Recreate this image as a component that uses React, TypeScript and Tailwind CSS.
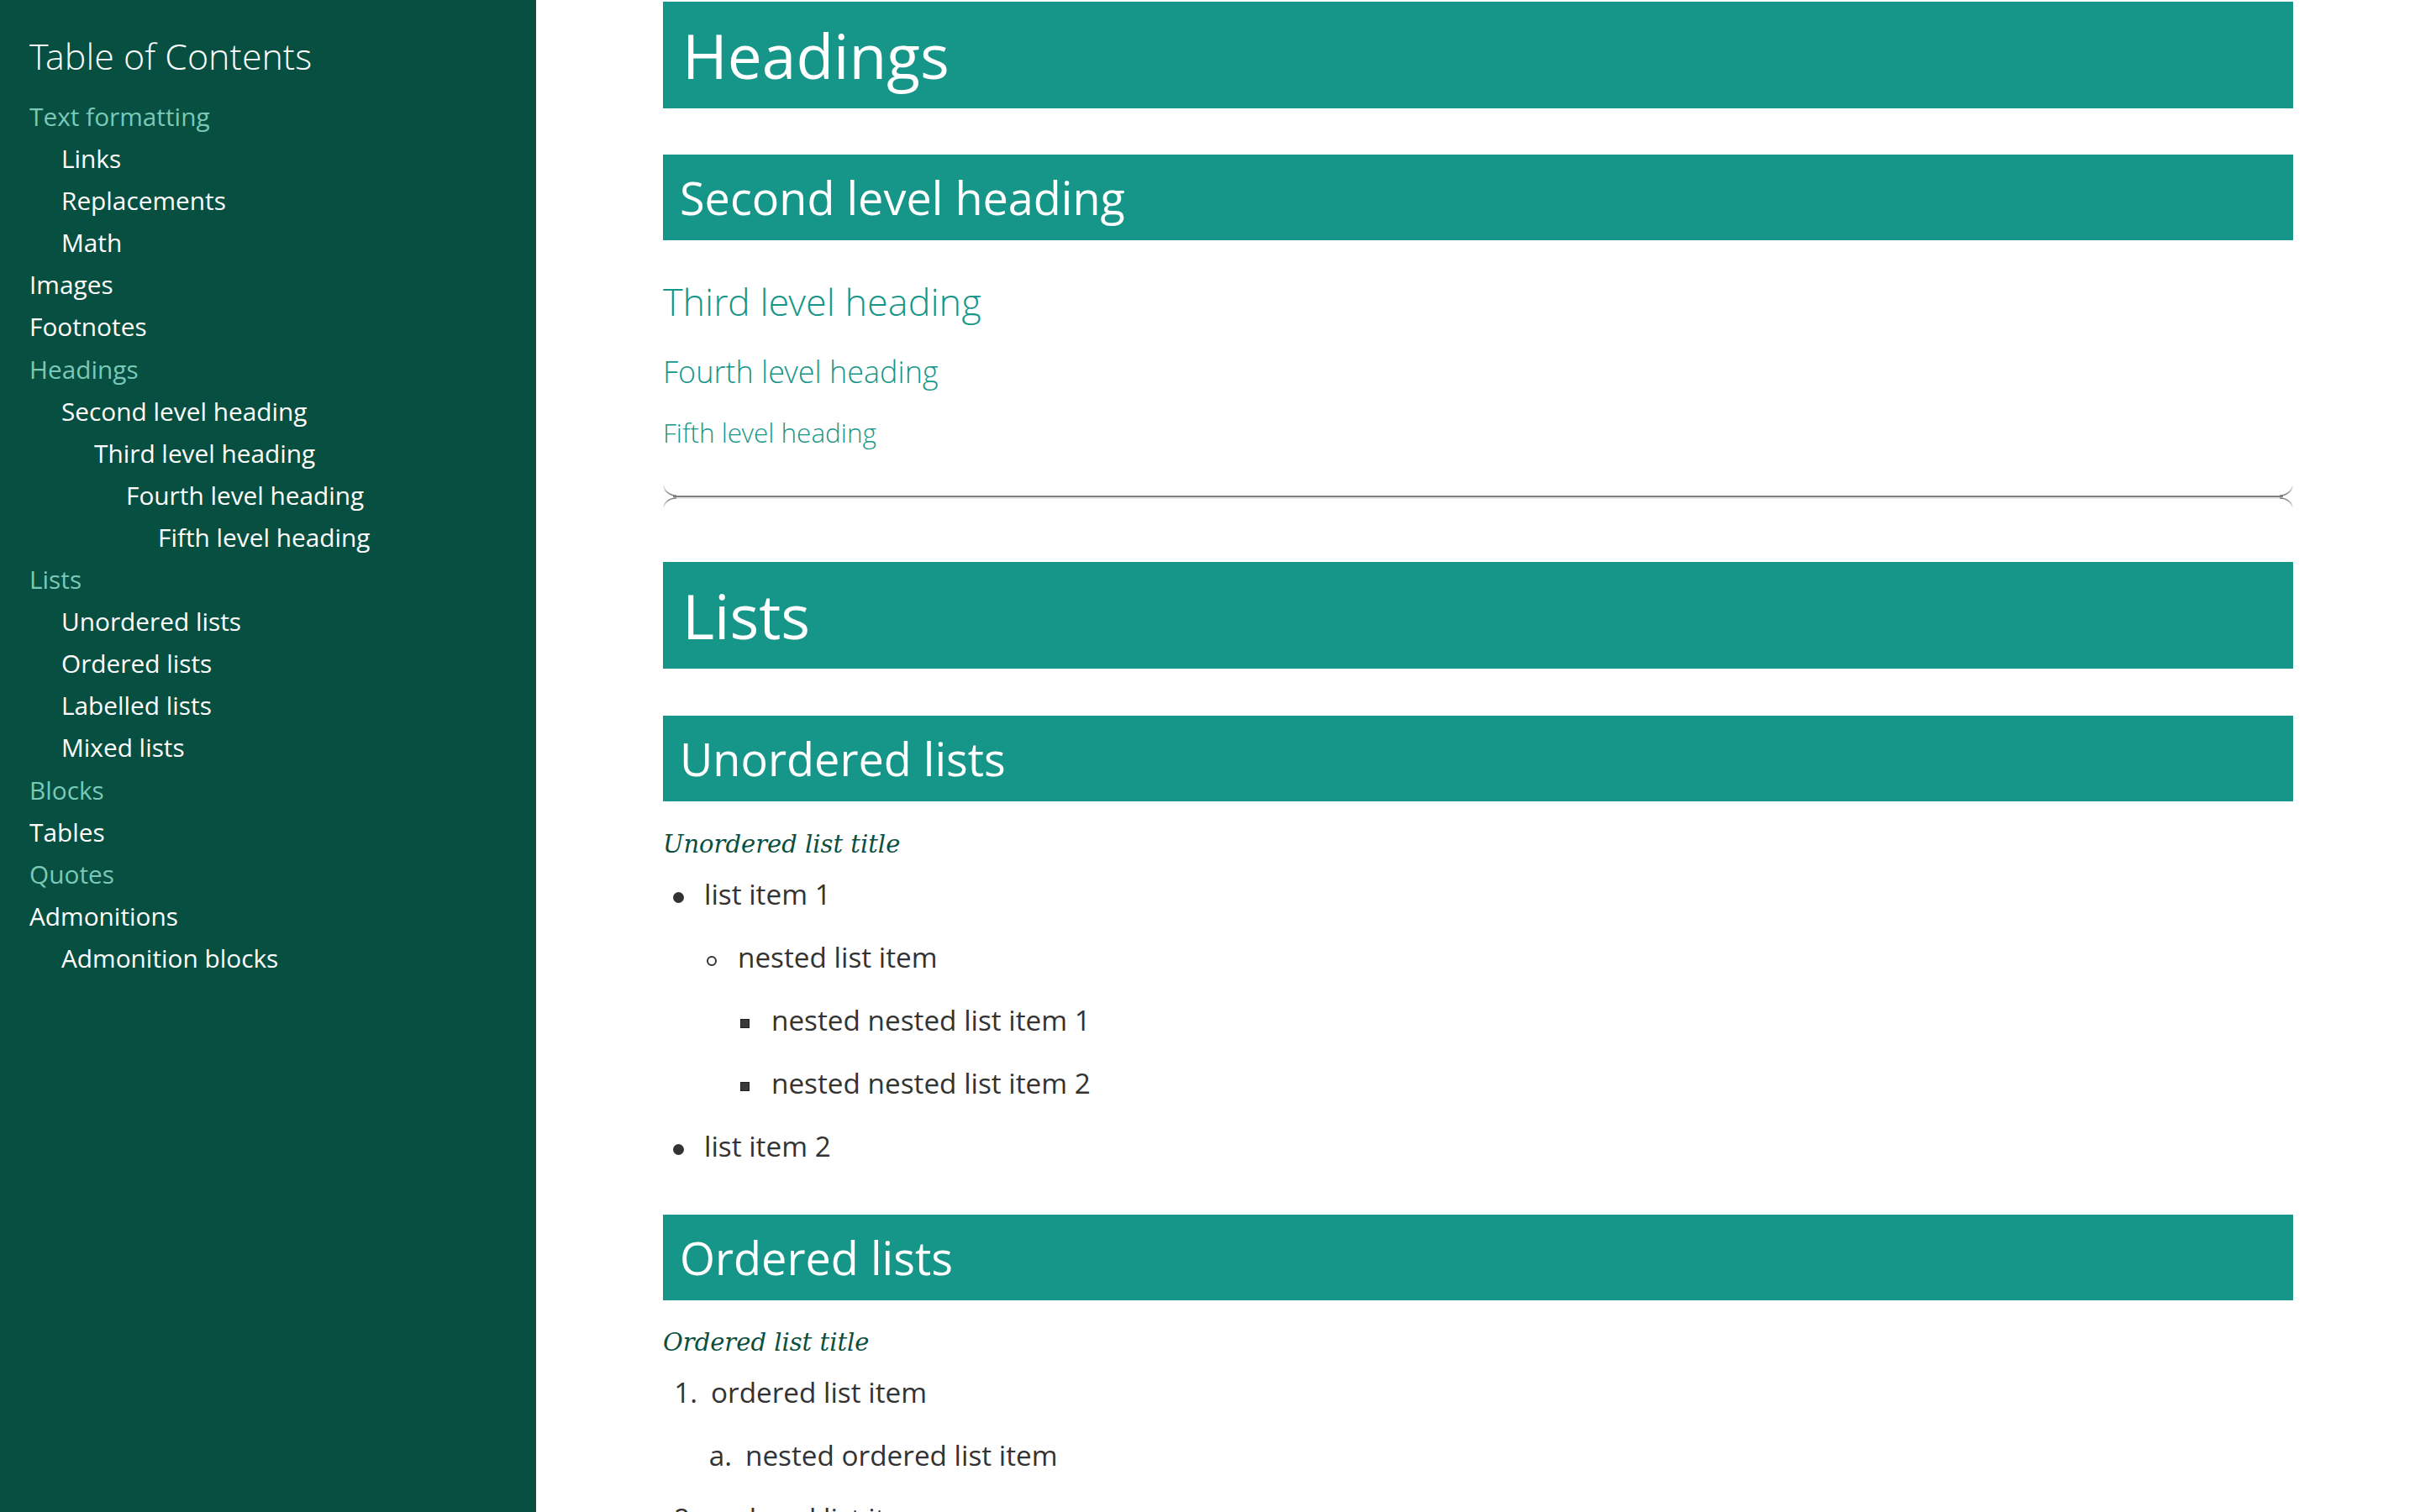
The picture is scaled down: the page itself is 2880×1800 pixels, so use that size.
import React from "react";

type TocItem = { label: string; level: 0 | 1 | 2 | 3 | 4; accent?: boolean };

const toc: TocItem[] = [
  { label: "Text formatting", level: 0, accent: true },
  { label: "Links", level: 1 },
  { label: "Replacements", level: 1 },
  { label: "Math", level: 1 },
  { label: "Images", level: 0 },
  { label: "Footnotes", level: 0 },
  { label: "Headings", level: 0, accent: true },
  { label: "Second level heading", level: 1 },
  { label: "Third level heading", level: 2 },
  { label: "Fourth level heading", level: 3 },
  { label: "Fifth level heading", level: 4 },
  { label: "Lists", level: 0, accent: true },
  { label: "Unordered lists", level: 1 },
  { label: "Ordered lists", level: 1 },
  { label: "Labelled lists", level: 1 },
  { label: "Mixed lists", level: 1 },
  { label: "Blocks", level: 0, accent: true },
  { label: "Tables", level: 0 },
  { label: "Quotes", level: 0, accent: true },
  { label: "Admonitions", level: 0 },
  { label: "Admonition blocks", level: 1 },
];

const indent: Record<number, string> = {
  0: "pl-0",
  1: "pl-[38px]",
  2: "pl-[77px]",
  3: "pl-[115px]",
  4: "pl-[153px]",
};

function BoxH1({ children, className = "" }: { children: React.ReactNode; className?: string }) {
  return (
    <h1 className={`h-[127px] bg-[#169689] pl-[23px] text-[73px] leading-[127px] font-normal text-white ${className}`}>
      {children}
    </h1>
  );
}

function BoxH2({ children, className = "" }: { children: React.ReactNode; className?: string }) {
  return (
    <h2 className={`h-[102px] bg-[#169689] pl-[20px] text-[54px] leading-[102px] font-normal text-white ${className}`}>
      {children}
    </h2>
  );
}

function Cap({ flip = false }: { flip?: boolean }) {
  const top = flip ? "capTopR" : "capTopL";
  const bot = flip ? "capBotR" : "capBotL";
  return (
    <svg width="16" height="28" viewBox="0 0 16 28" className={`shrink-0 ${flip ? "-scale-x-100" : ""}`}>
      <defs>
        <linearGradient id={top} x1="0" y1="0" x2="0" y2="1">
          <stop offset="0" stopColor="#ffffff" />
          <stop offset="1" stopColor="#7a7a7a" />
        </linearGradient>
        <linearGradient id={bot} x1="0" y1="0" x2="0" y2="1">
          <stop offset="0" stopColor="#7a7a7a" />
          <stop offset="1" stopColor="#ffffff" />
        </linearGradient>
      </defs>
      <path d="M0.8 0 A15.2 13 0 0 0 16 13" fill="none" stroke={`url(#${top})`} strokeWidth="1.6" />
      <rect x="12" y="13" width="4" height="2" fill="#7f7f7f" />
      <path d="M16 16 A15.2 12 0 0 0 0.8 28" fill="none" stroke={`url(#${bot})`} strokeWidth="1.6" />
    </svg>
  );
}

function Rule() {
  return (
    <div className="mt-[40px] flex h-[28px]">
      <Cap />
      <div className="flex-1 pt-[13px]">
        <div className="h-[2px] bg-[#7f7f7f]" />
        <div className="h-[2px] bg-[#e8e8e8]" />
      </div>
      <Cap flip />
    </div>
  );
}

function Disc() {
  return <span className="block h-[13px] w-[13px] rounded-full bg-[#333333]" />;
}
function Circle() {
  return <span className="block h-[12px] w-[12px] rounded-full border-2 border-[#333333]" />;
}
function Square() {
  return <span className="block h-[11px] w-[11px] border border-[#222222] bg-[#3a3a3a]" />;
}

const ulIndent: Record<number, string> = {
  0: "pl-0",
  1: "pl-[40px]",
  2: "pl-[80px]",
};

function UlItem({ level, children }: { level: 0 | 1 | 2; children: React.ReactNode }) {
  const marker = level === 0 ? <Disc /> : level === 1 ? <Circle /> : <Square />;
  return (
    <li className={`flex h-[75px] leading-[75px] ${ulIndent[level]}`}>
      <span className="flex w-[49px] shrink-0 items-center pl-[12px] pt-[8px]">{marker}</span>
      <span>{children}</span>
    </li>
  );
}

const olIndent: Record<number, string> = {
  0: "pl-0",
  1: "pl-[41px]",
};

function OlItem({ level, marker, children }: { level: 0 | 1; marker: string; children: React.ReactNode }) {
  return (
    <li className={`flex h-[75px] leading-[75px] ${olIndent[level]}`}>
      <span className="w-[57px] shrink-0 pr-[16px] text-right">{marker}</span>
      <span>{children}</span>
    </li>
  );
}

const light = "font-['Open_Sans_Light','Open_Sans',sans-serif] font-light";

export default function App() {
  return (
    <div className="flex h-[1800px] w-[2880px] overflow-hidden bg-white font-['Open_Sans',sans-serif]">
      <aside className="h-full w-[638px] shrink-0 bg-[#064f41] pl-[35px]">
        <h2 className={`mt-[37px] text-[43px] leading-[60px] text-white ${light}`}>Table of Contents</h2>
        <ul className="mt-[17px]">
          {toc.map((t) => (
            <li
              key={t.label}
              className={`h-[50.1px] text-[29.8px] leading-[50px] ${indent[t.level]} ${
                t.accent ? "text-[#79c9b6]" : "text-white"
              }`}
            >
              {t.label}
            </li>
          ))}
        </ul>
      </aside>

      <main className="flex-1">
        <div className="mx-auto w-[1940px] text-[#333333]">
          <BoxH1 className="mt-[2px]">Headings</BoxH1>
          <BoxH2 className="mt-[55px]">Second level heading</BoxH2>
          <h3 className={`mt-[43px] text-[45px] leading-[60px] text-[#169689] ${light}`}>Third level heading</h3>
          <h4 className={`mt-[29px] text-[36px] leading-[50px] text-[#169689] ${light}`}>Fourth level heading</h4>
          <h5 className={`mt-[25px] text-[31.5px] leading-[44px] text-[#169689] ${light}`}>Fifth level heading</h5>
          <Rule />

          <BoxH1 className="mt-[64px]">Lists</BoxH1>
          <BoxH2 className="mt-[56px]">Unordered lists</BoxH2>
          <div className="mt-[29px] h-[44px] font-['DejaVu_Serif',serif] text-[29px] leading-[44px] text-[#0a4f3f] italic">
            Unordered list title
          </div>
          <ul className="text-[33.3px]">
            <UlItem level={0}>list item 1</UlItem>
            <UlItem level={1}>nested list item</UlItem>
            <UlItem level={2}>nested nested list item 1</UlItem>
            <UlItem level={2}>nested nested list item 2</UlItem>
            <UlItem level={0}>list item 2</UlItem>
          </ul>

          <BoxH2 className="mt-[44px]">Ordered lists</BoxH2>
          <div className="mt-[28px] h-[44px] font-['DejaVu_Serif',serif] text-[29px] leading-[44px] text-[#0a4f3f] italic">
            Ordered list title
          </div>
          <ol className="text-[33.3px]">
            <OlItem level={0} marker="1.">ordered list item</OlItem>
            <OlItem level={1} marker="a.">nested ordered list item</OlItem>
            <OlItem level={0} marker="2.">ordered list item</OlItem>
          </ol>
        </div>
      </main>
    </div>
  );
}
